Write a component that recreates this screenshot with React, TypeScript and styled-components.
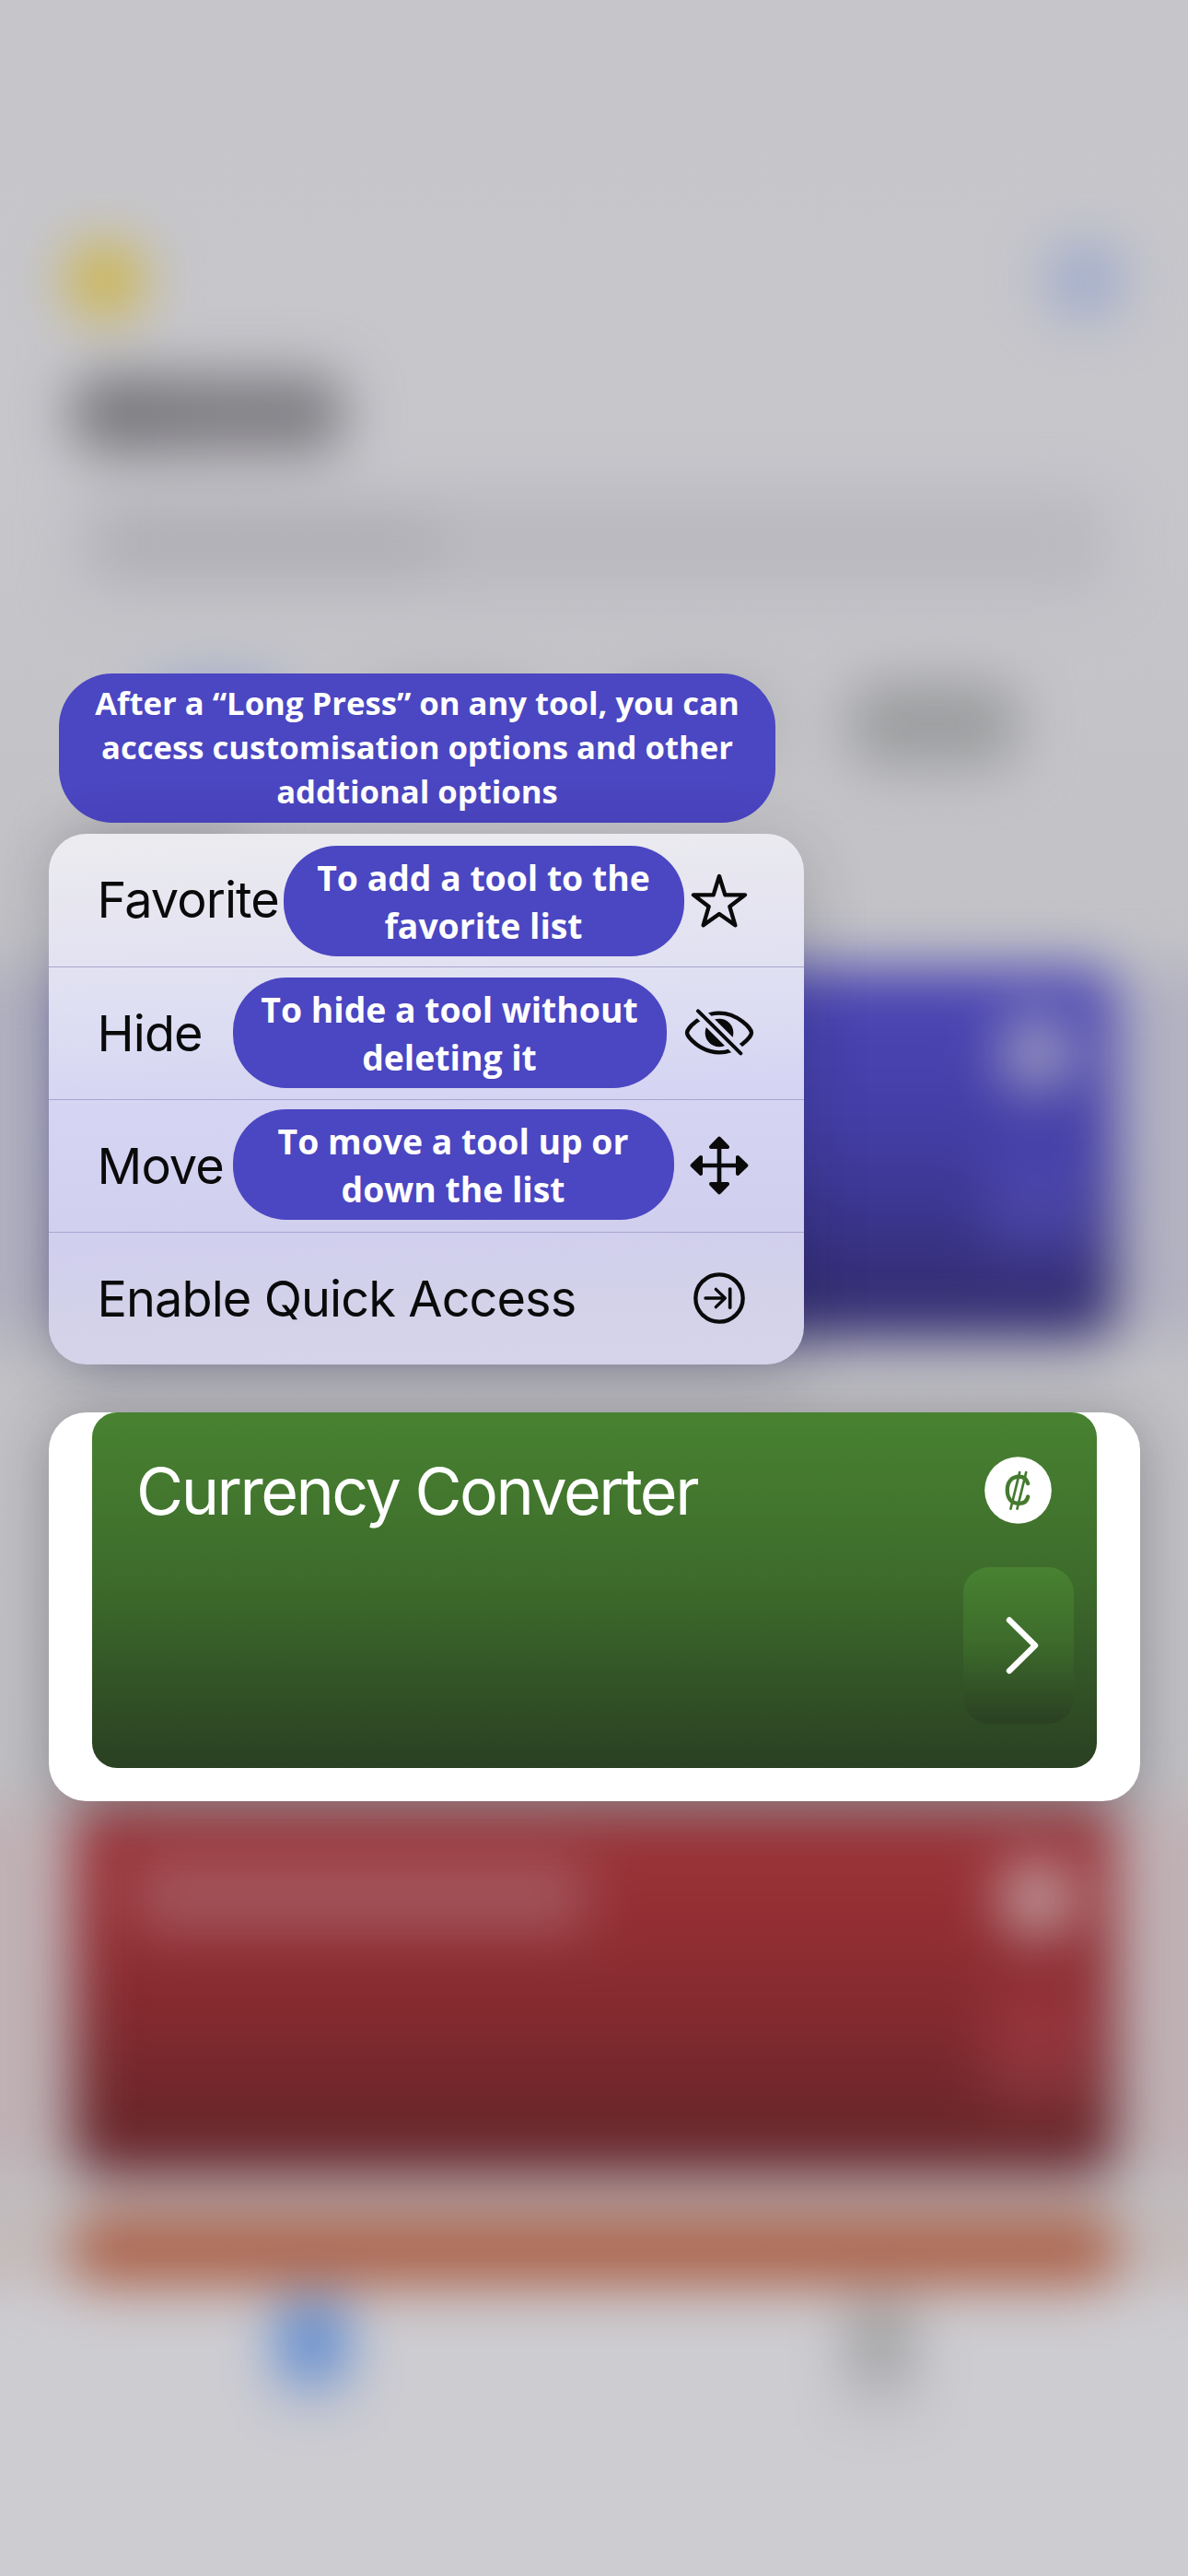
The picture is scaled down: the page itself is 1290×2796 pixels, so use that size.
import React from "react";
import styled, { createGlobalStyle } from "styled-components";

const GlobalStyle = createGlobalStyle`
  *, *::before, *::after { box-sizing: border-box; }
  body { margin: 0; background: #c7c6cb; }
`;

const Screen = styled.main`
  position: relative;
  width: 1290px;
  height: 2796px;
  overflow: hidden;
  font-family: Inter, "Liberation Sans", sans-serif;
  background: linear-gradient(180deg, #c6c6ca 0, #c7c6cb 500px, #c3c3c7 900px, #c0c0c4 1900px, #c1c1c4 2400px, #cdccd1 2540px, #cdccd1 100%);
`;

/* Out-of-focus home screen behind the context menu */

const Backdrop = styled.div`
  position: absolute;
  inset: 0;
  display: flex;
  flex-direction: column;
  filter: blur(30px);
`;

const NavBar = styled.div`
  display: flex;
  flex: none;
  justify-content: space-between;
  padding: 262px 70px 0 72px;
  height: 406px;
`;

const NavDot = styled.span<{ $color: string }>`
  width: 84px;
  height: 84px;
  border-radius: 50%;
  background: ${(p) => p.$color};
`;

const HeadingMark = styled.div`
  flex: none;
  width: 296px;
  height: 86px;
  margin-left: 78px;
  background: linear-gradient(100deg, #767579 0, #807f84 60%, #7d7c81 100%);
  border-radius: 34px;
`;

const SearchField = styled.div`
  display: flex;
  flex: none;
  align-items: center;
  margin: 42px 84px 0 84px;
  height: 112px;
  padding-left: 26px;
  border-radius: 30px;
  background: #bab9bf;
`;

const SearchMark = styled.span`
  width: 366px;
  height: 46px;
  background: #a9a8ae;
  opacity: 0.8;
`;

const FilterTabs = styled.div`
  display: grid;
  flex: none;
  grid-template-columns: 150px 190px 170px 184px;
  column-gap: 84px;
  padding: 94px 0 0 160px;
  height: 220px;
`;

const FilterTab = styled.span<{ $color: string }>`
  height: 92px;
  border-radius: 30px;
  background: ${(p) => p.$color};
`;

const SectionMark = styled.div`
  flex: none;
  width: 180px;
  height: 50px;
  margin: 36px 0 0 80px;
  background: #a2a2a7;
`;

const ToolBand = styled.div<{ $tint: string; $gap: number; $height: number }>`
  flex: none;
  height: ${(p) => p.$height}px;
  margin: ${(p) => p.$gap}px -60px 0;
  padding: 0 137px 0 138px;
  background: linear-gradient(90deg, ${(p) => p.$tint} 100px, transparent 138px, transparent 1273px, ${(p) => p.$tint} 1310px);
`;

const ToolBlur = styled.div<{ $fill: string; $round?: number; $top?: number }>`
  display: flex;
  justify-content: space-between;
  height: 100%;
  padding: ${(p) => p.$top ?? 50}px 26px 0 68px;
  border-radius: ${(p) => p.$round ?? 26}px;
  background: ${(p) => p.$fill};
`;

const ToolTitleMark = styled.span<{ $color: string }>`
  width: 490px;
  height: 80px;
  background: ${(p) => p.$color};
`;

const ToolSide = styled.div`
  display: flex;
  flex-direction: column;
  align-items: center;
  gap: 48px;
  width: 120px;
`;

const ToolBadge = styled.span<{ $color: string }>`
  width: 86px;
  height: 86px;
  border-radius: 50%;
  background: ${(p) => p.$color};
`;

const ToolGo = styled.span<{ $fill: string }>`
  width: 112px;
  height: 136px;
  border-radius: 26px;
  background: ${(p) => p.$fill};
`;

const TabBar = styled.div`
  display: grid;
  grid-template-columns: 1fr 1fr;
  flex: 1;
  margin: 0 -60px -60px;
  padding: 18px 60px 0 60px;
  background: #cdccd1;
`;

const TabItem = styled.div<{ $shift: number }>`
  display: flex;
  flex-direction: column;
  align-items: center;
  gap: 14px;
  transform: translateX(${(p) => p.$shift}px);
`;

const TabIcon = styled.span<{ $color: string }>`
  width: 76px;
  height: 88px;
  border-radius: 24px;
  background: ${(p) => p.$color};
`;

const TabLabel = styled.span<{ $color: string }>`
  width: 110px;
  height: 24px;
  background: ${(p) => p.$color};
`;

/* Foreground */

const Stage = styled.div`
  position: relative;
  display: flex;
  flex-direction: column;
  align-items: flex-start;
  padding: 731px 53px 0 53px;
`;

const Callout = styled.div`
  display: flex;
  align-items: center;
  justify-content: center;
  width: 778px;
  height: 161.5px;
  padding-bottom: 1px;
  margin-left: 11px;
  border-radius: 58px;
  background: #4b46c1;
  color: #fff;
  text-align: center;
  white-space: pre-line;
  font: 700 34.67px/48px "Open Sans", "Noto Sans", sans-serif;
`;

const Menu = styled.ul`
  list-style: none;
  width: 820.5px;
  margin: 12px 0 0 -0.5px;
  padding: 0;
  border-radius: 41px;
  background: linear-gradient(178deg, #ececef 0, #e4e3f1 20%, #dedff2 32%, #d5d4f3 50%, #d1cfee 74%, #d3d2e9 88%, #d6d4ea 100%);
  box-shadow: 0 12px 70px rgba(20, 20, 40, 0.2);
`;

const MenuItem = styled.li`
  position: relative;
  display: flex;
  align-items: center;
  justify-content: space-between;
  height: 144.1px;
  padding: 0 51px 0 53px;
  color: #0a0a0b;

  & + & {
    border-top: 1px solid #a9a6cf;
  }
`;

const MenuLabel = styled.span`
  padding-top: 1px;
  font-size: 54px;
  line-height: 72px;
  letter-spacing: -0.9px;
  white-space: nowrap;
`;

const IconSlot = styled.span`
  display: flex;
  align-items: center;
  justify-content: center;
  width: 82px;

  svg { display: block; }
`;

const Note = styled.span<{ $left: number; $top: number; $width: number }>`
  position: absolute;
  left: ${(p) => p.$left}px;
  top: ${(p) => p.$top}px;
  display: flex;
  align-items: center;
  justify-content: center;
  width: ${(p) => p.$width}px;
  height: 120px;
  padding-top: 2px;
  border-radius: 58px;
  background: #4b46c1;
  color: #fff;
  text-align: center;
  white-space: pre-line;
  font: 700 37.33px/52px "Open Sans", "Noto Sans", sans-serif;
`;

const Preview = styled.section`
  width: 1184.5px;
  height: 422px;
  margin-top: 52.5px;
  padding: 0 47px 36px;
  border-radius: 41px;
  background: #fff;
  box-shadow: 0 6px 60px rgba(20, 20, 30, 0.3);
`;

const greenFill = "linear-gradient(180deg, #488231 0%, #3d6b2b 48%, #2b4323 96%, #2a4123 100%)";

const ToolCard = styled.div`
  display: flex;
  justify-content: space-between;
  height: 100%;
  padding: 48px 25px 0 48px;
  border-radius: 27px;
  background: ${greenFill};
`;

const ToolName = styled.h1`
  margin: 0;
  color: #fff;
  font-size: 70px;
  font-weight: 400;
  line-height: 76px;
  letter-spacing: -2.5px;
  white-space: nowrap;
`;

const ToolActions = styled.div`
  display: flex;
  flex-direction: column;
  align-items: center;
  gap: 47px;
  width: 120px;

  svg { display: block; }
`;

const OpenButton = styled.button`
  display: flex;
  align-items: center;
  justify-content: center;
  width: 120px;
  height: 170px;
  padding: 0 0 0 8px;
  border: 0;
  border-radius: 28px;
  background: ${greenFill};
`;

const StarIcon = () => (
  <svg width="64" height="62" viewBox="868 670 192 186" fill="none" stroke="#0a0a0b" strokeWidth="13" strokeLinejoin="round">
    <path d="M964 685 983 746H1048L998 784 1016 845 964 808 912 845 930 784 880 746H945Z" />
  </svg>
);

const EyeSlashIcon = () => (
  <svg width="80" height="54" viewBox="844 42 240 162" fill="none" stroke="#0a0a0b">
    <mask id="slash" maskUnits="userSpaceOnUse" x="844" y="42" width="240" height="162">
      <rect x="844" y="42" width="240" height="162" fill="#fff" stroke="none" />
      <path d="M875 32 1054 210" stroke="#000" strokeWidth="38" />
    </mask>
    <g mask="url(#slash)">
      <path d="M859 123C859 109 905 59 964 59S1069 109 1069 123 1023 187 964 187 859 137 859 123Z" strokeWidth="13" />
      <circle cx="964" cy="123" r="46" fill="#0a0a0b" stroke="none" />
    </g>
    <path d="M895 52 1034 190" strokeWidth="12" strokeLinecap="round" />
  </svg>
);

const MoveIcon = () => (
  <svg width="64" height="64" viewBox="868 460 192 192" fill="#0a0a0b" stroke="#0a0a0b" strokeLinejoin="round">
    <path d="M964 490V622M898 556H1030" strokeWidth="14" />
    <path d="M964 468 991 496H937ZM964 644 991 616H937ZM876 556 904 529V583ZM1052 556 1024 529V583Z" strokeWidth="12" />
  </svg>
);

const QuickAccessIcon = () => (
  <svg width="58" height="58" viewBox="878 902 174 174" fill="none" stroke="#0a0a0b" strokeLinecap="round" strokeLinejoin="round">
    <circle cx="965" cy="989" r="77" strokeWidth="13" />
    <path d="M920 989H984M954 960 984 989 954 1018" strokeWidth="10" />
    <path d="M1000 959V1020" strokeWidth="11" />
  </svg>
);

const ColonIcon = () => (
  <svg width="73" height="73" viewBox="328 215 218 218" fill="none" strokeLinecap="round">
    <circle cx="437" cy="324" r="108.5" fill="#fff" />
    <g stroke="#457a2f">
      <path d="M469 302C464 287 455 280 441 280 417 280 402 296 402 324S417 367 441 367C456 367 466 359 469 345" strokeWidth="13" />
      <path d="M442 266 413 384M463 266 434 384" strokeWidth="8" />
    </g>
  </svg>
);

const ChevronIcon = () => (
  <svg width="36" height="64" viewBox="0 0 36 64" fill="none" stroke="#fff" strokeWidth="6.4" strokeLinecap="round" strokeLinejoin="round">
    <path d="M4 4.5 32 32 4 59.5" />
  </svg>
);

type Item = {
  label: string;
  icon: React.ReactNode;
  note?: { text: string; left: number; top: number; width: number };
};

const items: Item[] = [
  { label: "Favorite", icon: <StarIcon />, note: { text: "To add a tool to the\nfavorite list", left: 255, top: 13.5, width: 435 } },
  { label: "Hide", icon: <EyeSlashIcon />, note: { text: "To hide a tool without\ndeleting it", left: 200, top: 11.5, width: 471 } },
  { label: "Move", icon: <MoveIcon />, note: { text: "To move a tool up or\ndown the list", left: 200, top: 10.5, width: 479 } },
  { label: "Enable Quick Access", icon: <QuickAccessIcon /> },
];

export default function App() {
  return (
    <Screen>
      <GlobalStyle />
      <Backdrop aria-hidden>
        <NavBar>
          <NavDot $color="#cdb446" />
          <NavDot $color="#9daacc" />
        </NavBar>
        <HeadingMark />
        <SearchField>
          <SearchMark />
        </SearchField>
        <FilterTabs>
          <FilterTab $color="#93a4cc" />
          <FilterTab $color="#b0b1b4" />
          <FilterTab $color="#b0b1b4" />
          <FilterTab $color="#9c9d9f" />
        </FilterTabs>
        <SectionMark />
        <ToolBand $tint="#b2b1c1" $gap={98} $height={404}>
          <ToolBlur $fill="linear-gradient(180deg, #4b46b4 0%, #443fa8 40%, #3a358c 68%, #332d72 88%, #332d70 100%)">
            <span />
            <ToolSide>
              <ToolBadge $color="#9a98c0" />
              <ToolGo $fill="linear-gradient(180deg, #4742ae 0%, #4b47a8 60%, #3f3a8c 100%)" />
            </ToolSide>
          </ToolBlur>
        </ToolBand>
        <ToolBand $tint="#bfb0b4" $gap={502} $height={406}>
          <ToolBlur $top={62} $fill="linear-gradient(180deg, #9c383d 0%, #942e33 30%, #822a2f 58%, #6b262a 84%, #63242a 100%)">
            <ToolTitleMark $color="#a2555b" />
            <ToolSide>
              <ToolBadge $color="#bf9a9e" />
              <ToolGo $fill="linear-gradient(180deg, #97323a 0%, #95353c 50%, #80363b 100%)" />
            </ToolSide>
          </ToolBlur>
        </ToolBand>
        <ToolBand $tint="#c3b8b7" $gap={42} $height={76}>
          <ToolBlur $round={16} $fill="#aa5f46" />
        </ToolBand>
        <TabBar>
          <TabItem $shift={16}>
            <TabIcon $color="#5b89d0" />
            <TabLabel $color="#bec3d1" />
          </TabItem>
          <TabItem $shift={-12}>
            <TabIcon $color="#a2a2a4" />
            <TabLabel $color="#bcbbc0" />
          </TabItem>
        </TabBar>
      </Backdrop>

      <Stage>
        <Callout>{"After a “Long Press” on any tool, you can\naccess customisation options and other\naddtional options"}</Callout>
        <Menu>
          {items.map(({ label, icon, note }) => (
            <MenuItem key={label}>
              <MenuLabel>{label}</MenuLabel>
              {note && (
                <Note $left={note.left} $top={note.top} $width={note.width}>
                  {note.text}
                </Note>
              )}
              <IconSlot>{icon}</IconSlot>
            </MenuItem>
          ))}
        </Menu>
        <Preview>
          <ToolCard>
            <ToolName>Currency Converter</ToolName>
            <ToolActions>
              <ColonIcon />
              <OpenButton aria-label="Open Currency Converter">
                <ChevronIcon />
              </OpenButton>
            </ToolActions>
          </ToolCard>
        </Preview>
      </Stage>
    </Screen>
  );
}
